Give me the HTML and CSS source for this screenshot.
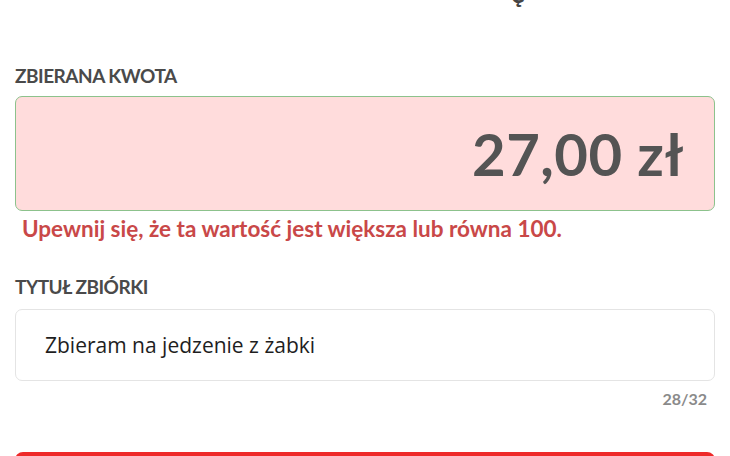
FILE: index.html
```html
<!DOCTYPE html>
<html lang="pl">
<head>
<meta charset="utf-8">
<link rel="stylesheet" href="styles.css">
</head>
<body>
<div class="page">
  <div class="title-clip"><span class="title-text">ę</span></div>
  <section class="field">
    <div class="label">ZBIERANA KWOTA</div>
    <div class="amount-box">27,00 zł</div>
    <div class="error">Upewnij się, że ta wartość jest większa lub równa 100.</div>
  </section>
  <section class="field second">
    <div class="label">TYTUŁ ZBIÓRKI</div>
    <div class="text-input">Zbieram na jedzenie z żabki</div>
    <div class="counter">28/32</div>
  </section>
  <div class="button"></div>
</div>
</body>
</html>
```
FILE: styles.css
```css
html, body {
  margin: 0;
  padding: 0;
  background: #ffffff;
}
.page {
  width: 730px;
  height: 456px;
  overflow: hidden;
  padding: 0 15px;
  box-sizing: border-box;
  font-family: "Lato", "Noto Sans", sans-serif;
}
.title-clip {
  height: 8px;
  overflow: hidden;
  padding-left: 496px;
}
.title-text {
  display: block;
  font-family: "Lato", sans-serif;
  font-weight: 700;
  font-size: 26px;
  line-height: 28px;
  margin-top: -21px;
  color: #444;
}
.field {
  margin-top: 56px;
}
.field.second {
  margin-top: 32px;
}
.label {
  font-size: 19px;
  font-weight: 700;
  color: #4a4a4a;
  line-height: 24px;
  letter-spacing: -0.5px;
}
.amount-box {
  margin-top: 8px;
  height: 115px;
  box-sizing: border-box;
  border: 1.5px solid #8cc28c;
  border-radius: 7px;
  background: #ffdcdc;
  display: flex;
  align-items: center;
  justify-content: flex-end;
  padding-right: 30px;
  font-size: 58px;
  font-weight: 700;
  color: #545454;
  letter-spacing: 0.5px;
}
.error {
  margin-top: 4px;
  padding-left: 7px;
  font-size: 22.5px;
  font-weight: 700;
  color: #c94848;
  line-height: 28px;
}
.text-input {
  margin-top: 10px;
  height: 72px;
  box-sizing: border-box;
  border: 1.5px solid #e4e4e4;
  border-radius: 7px;
  display: flex;
  align-items: center;
  padding-left: 29px;
  font-family: "Open Sans", sans-serif;
  font-size: 21px;
  color: #1e1e1e;
}
.counter {
  margin-top: 8px;
  text-align: right;
  padding-right: 8px;
  font-size: 16px;
  font-weight: 700;
  color: #8a8a8a;
}
.button {
  margin-top: 44px;
  height: 40px;
  background: #ee2a2a;
  border-radius: 8px;
}
```
